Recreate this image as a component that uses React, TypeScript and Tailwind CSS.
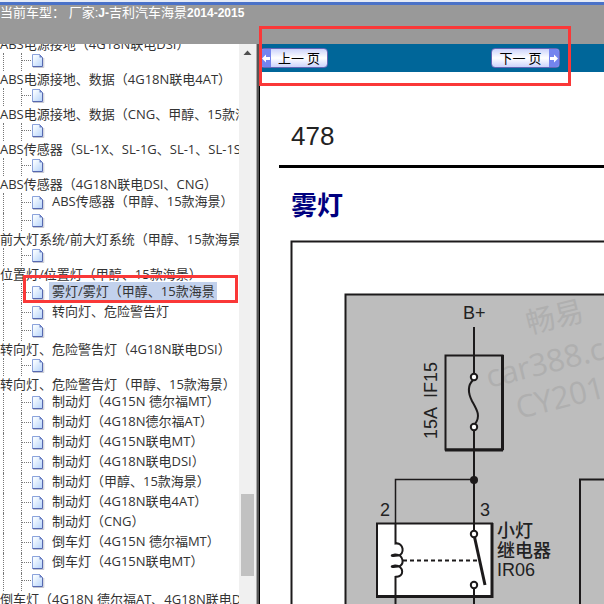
import clsx from "clsx";

type Leaf = { label?: string; active?: boolean };
type Group = { title: string; leaves: Leaf[] };

const groups: Group[] = [
  { title: "ABS电源接地（4G18N联电DSI）", leaves: [{}] },
  { title: "ABS电源接地、数据（4G18N联电4AT）", leaves: [{}] },
  { title: "ABS电源接地、数据（CNG、甲醇、15款海景）", leaves: [{}] },
  { title: "ABS传感器（SL-1X、SL-1G、SL-1、SL-1S）", leaves: [{}] },
  {
    title: "ABS传感器（4G18N联电DSI、CNG）",
    leaves: [{ label: "ABS传感器（甲醇、15款海景）" }, {}],
  },
  { title: "前大灯系统/前大灯系统（甲醇、15款海景）", leaves: [{}] },
  {
    title: "位置灯/位置灯（甲醇、15款海景）",
    leaves: [
      { label: "雾灯/雾灯（甲醇、15款海景", active: true },
      { label: "转向灯、危险警告灯" },
      {},
    ],
  },
  { title: "转向灯、危险警告灯（4G18N联电DSI）", leaves: [{}] },
  {
    title: "转向灯、危险警告灯（甲醇、15款海景）",
    leaves: [
      { label: "制动灯（4G15N 德尔福MT）" },
      { label: "制动灯（4G18N德尔福AT）" },
      { label: "制动灯（4G15N联电MT）" },
      { label: "制动灯（4G18N联电DSI）" },
      { label: "制动灯（甲醇、15款海景）" },
      { label: "制动灯（4G18N联电4AT）" },
      { label: "制动灯（CNG）" },
      { label: "倒车灯（4G15N 德尔福MT）" },
      { label: "倒车灯（4G15N联电MT）" },
      {},
    ],
  },
  { title: "倒车灯（4G18N 德尔福AT、4G18N联电DSI）", leaves: [{}] },
];

const PageIcon = () => (
  <svg width="14" height="16" viewBox="0 0 14 16" className="shrink-0">
    <defs>
      <linearGradient id="sheet" x1="0" y1="0" x2="1" y2="1">
        <stop offset="0.2" stopColor="#f4faff" />
        <stop offset="1" stopColor="#b4d2fa" />
      </linearGradient>
    </defs>
    <path d="M2 14.5H12.8V5" fill="none" stroke="#c4c6d0" />
    <path d="M1.5 1.5H8.5L11.5 4.5V13.5H1.5Z" fill="url(#sheet)" />
    <path d="M1.5 13.5V1.5H8.5" fill="none" stroke="#8ba3dc" />
    <path d="M8.5 1.5L11.5 4.5V13.5H1.5" fill="none" stroke="#5668b0" />
    <path d="M8.5 1.5V4.5H11.5Z" fill="#6d83c8" />
  </svg>
);

const TreeLeaf = ({ label, active }: Leaf) => (
  <li
    className={clsx(
      "relative ml-[3px] flex items-start border-l border-dotted border-[#777]",
      label ? "h-5" : "h-[18px]",
    )}
  >
    <div className="ml-[17px] flex h-full items-start border-l border-dotted border-[#777]">
      <span
        className={clsx(
          "w-[9px] border-t border-dotted border-[#777]",
          label ? "mt-[9px]" : "mt-[7px]",
        )}
      />
      <span className={label ? "mt-0.5" : "mt-0"}>
        <PageIcon />
      </span>
    </div>
    {label && (
      <a
        href="#"
        className={clsx(
          "-mt-px ml-1 pr-0.5 pl-[3px] leading-[18px] whitespace-nowrap",
          active && "bg-[#c2d1ec]",
        )}
      >
        {label}
      </a>
    )}
    {active && (
      <span className="pointer-events-none absolute -top-2 left-[19px] h-7 w-[215px] border-3 border-[#fa3838]" />
    )}
  </li>
);

const Sidebar = () => (
  <aside className="flex w-64 shrink-0 overflow-hidden bg-white">
    <nav className="min-w-0 flex-1 overflow-hidden font-['Open_Sans','Noto_Sans_CJK_SC',sans-serif] text-[13px] text-[#333]">
      <ul className="-mt-2">
        {groups.map(({ title, leaves }) => (
          <li key={title}>
            <a href="#" className="block h-[17px] leading-[17px] whitespace-nowrap">
              {title}
            </a>
            <ul>
              {leaves.map((leaf, i) => (
                <TreeLeaf key={i} {...leaf} />
              ))}
            </ul>
          </li>
        ))}
      </ul>
    </nav>
    <div className="flex w-[17px] flex-col items-center bg-[#f0f0f0]">
      <svg width="9" height="17" viewBox="0 0 9 17" className="shrink-0">
        <path d="M0.5 11L4.5 6.5L8.5 11Z" fill="#505050" />
      </svg>
      <div className="grow-[433]" />
      <div className="h-[82px] w-[13px] bg-[#c1c1c1]" />
      <div className="grow-[28]" />
    </div>
  </aside>
);

const Arrow = ({ flip }: { flip?: boolean }) => (
  <span className="flex w-[10px] items-center justify-center bg-[#7484ee]">
    <svg width="8" height="9" viewBox="0 0 8 9" className={clsx(flip && "rotate-180")}>
      <path d="M0 4.5L4 0.5V3H8V6H4V8.5Z" fill="#fff" />
    </svg>
  </span>
);

const pagerClass =
  "flex h-5 overflow-hidden rounded-sm border border-[#6666b4] bg-linear-to-b from-[#ccd3fb] via-white to-[#ccd3fb] font-['Noto_Sans_CJK_SC',sans-serif] text-[13px] leading-[18px] text-black";

const Diagram = () => (
  <svg
    width="640"
    height="480"
    viewBox="0 0 640 480"
    className="ml-[30px] shrink-0 font-['Liberation_Sans','Noto_Sans_CJK_SC',sans-serif]"
    fill="none"
    stroke="#1c1a1b"
    strokeWidth="2"
  >
    <rect x="1.5" y="1.5" width="630" height="470" />
    <rect x="55.5" y="54.5" width="560" height="400" fill="#bdbdbd" />

    <g
      fill="#afafaf"
      stroke="none"
      className="font-['Open_Sans','Noto_Sans_CJK_SC',sans-serif]"
    >
      <text transform="translate(239 94) rotate(-14)" fontSize="29">畅易</text>
      <text transform="translate(199 148) rotate(-14)" fontSize="31">car388.com</text>
      <text transform="translate(229 179) rotate(-14)" fontSize="31">CY2016</text>
    </g>

    {/* fuse */}
    <path d="M184 87V134M184 190V291" />
    <rect x="155.5" y="115.5" width="57" height="94" />
    <path d="M212.5 115V210M155 210H213" strokeWidth="3" />
    <path d="M183 140C177 146 178 153 182 161C187 170 191 176 185 184" />
    <circle cx="184" cy="137" r="3.2" fill="#fff" />
    <circle cx="184" cy="187" r="3.2" fill="#fff" />

    <circle cx="184" cy="240" r="4" fill="#1c1a1b" stroke="none" />
    <path d="M184 239.5H105.5V284" strokeWidth="1.5" />
    <path d="M290 480V239.5H640" />

    {/* relay */}
    <rect x="87" y="283.5" width="115" height="73" fill="#fff" />
    <path d="M202 283V358M86 356.5H203" strokeWidth="3" />
    <path d="M105.5 283V303.5C114 302 115 315 108 315.5C102 316.5 99 315.5 105 314.5C114 314 115 326 108 326.5C102 327.5 99 326.5 105 325.5C114 325 115 338 105.5 336.5" />
    <path d="M105.5 336V480" />
    <path d="M184 283V291M184 348V480" />
    <path d="M113 320.5H188" strokeDasharray="4 3" />
    <path d="M184.5 297L195 345" strokeWidth="3" />
    <circle cx="184" cy="294" r="3.2" fill="#fff" />
    <circle cx="184" cy="345" r="3.2" fill="#fff" />

    <g fill="#222" stroke="none" fontSize="18">
      <text x="173" y="79">B+</text>
      <text transform="translate(147 199) rotate(-90)" xmlSpace="preserve">
        {"15A  IF15"}
      </text>
      <text x="90" y="276">2</text>
      <text x="190" y="276">3</text>
      <text x="207" y="297" fontWeight="500">小灯</text>
      <text x="207" y="317" fontWeight="500">继电器</text>
      <text x="207" y="336">IR06</text>
    </g>
  </svg>
);

const App = () => (
  <div className="relative flex h-screen flex-col overflow-hidden bg-white">
    <header className="h-11 shrink-0 overflow-hidden border-t-2 border-[#e4ebf7] bg-[#999]">
      <p className="border-t-3 border-[#4a72c8] font-['Liberation_Sans','Noto_Sans_CJK_SC',sans-serif] text-[13px] leading-4 whitespace-pre text-white">
        当前车型：{" "}厂家:<b className="text-xs">J-</b>吉利汽车海景
        <b className="text-xs">2014-2015</b>
      </p>
    </header>

    <div className="flex min-h-0 flex-1">
      <Sidebar />
      <div className="w-1 shrink-0 border-r border-l border-l-[#aaa] border-r-black bg-[#555]" />

      <main className="flex min-w-0 flex-1 flex-col overflow-hidden">
        <div className="flex h-7 shrink-0 items-center justify-between bg-[#006699] pr-11">
          <button type="button" className={clsx(pagerClass, "w-[68px]")}>
            <Arrow />
            <span className="flex-1">上一 页</span>
          </button>
          <button type="button" className={clsx(pagerClass, "w-[69px]")}>
            <span className="flex-1">下一 页</span>
            <Arrow flip />
          </button>
        </div>

        <p className="mt-12 pl-[31px] font-['Liberation_Sans',sans-serif] text-[26px] leading-8 text-[#222]">
          478
        </p>
        <hr className="mt-[13px] ml-[19px] border-t-3 border-black" />
        <h1 className="my-5 pl-[31px] font-['Noto_Sans_CJK_SC',sans-serif] text-[26px] leading-8 font-bold text-[#00007f]">
          雾灯
        </h1>
        <Diagram />
      </main>
    </div>

    <div className="pointer-events-none absolute top-[26px] right-[33px] left-[259px] h-[60px] border-3 border-[#fa3838]" />
  </div>
);

export default App;
